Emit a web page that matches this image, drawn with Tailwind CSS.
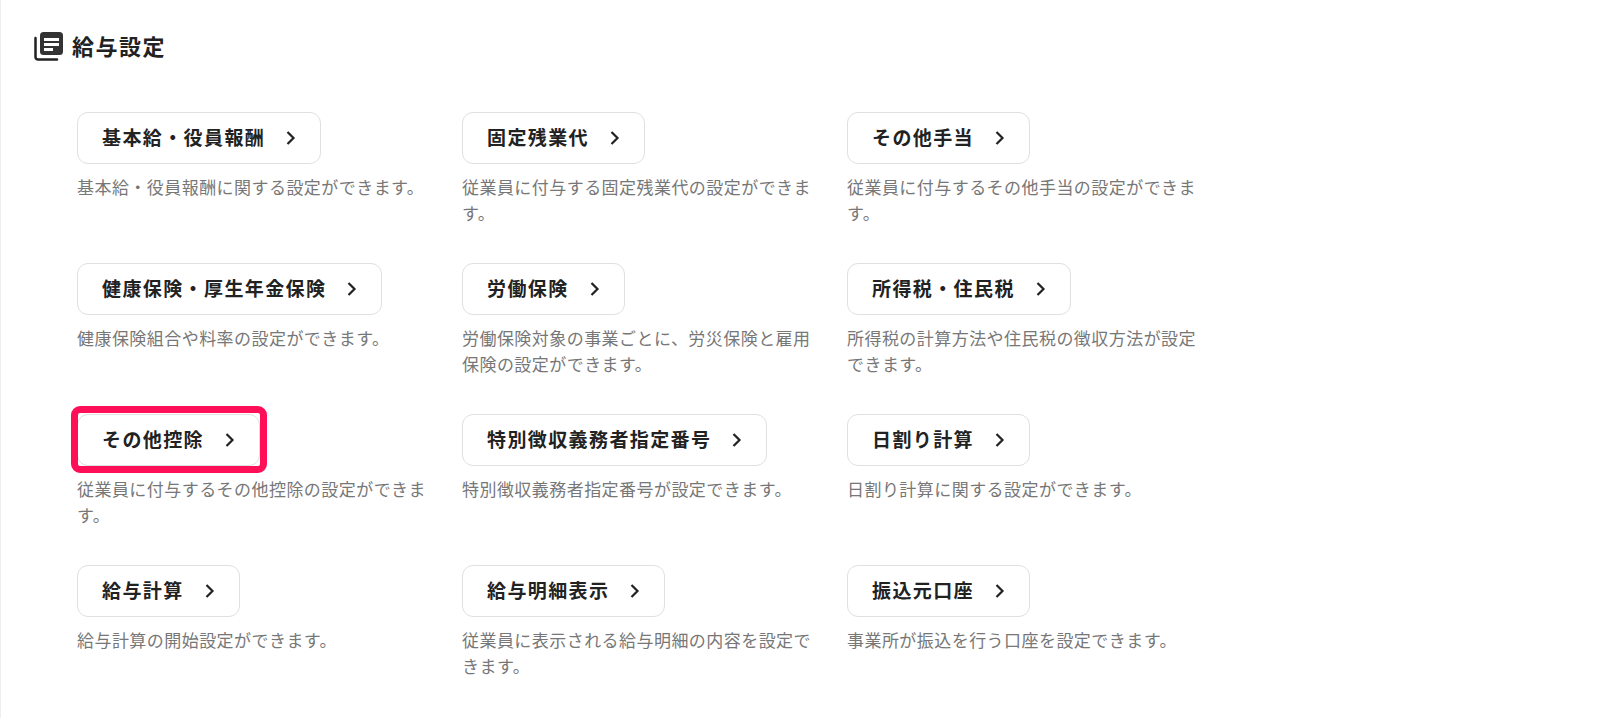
<!DOCTYPE html>
<html lang="ja">
<head>
  <meta charset="UTF-8" />
  <title>給与設定</title>
  <script src="https://cdn.jsdelivr.net/npm/@tailwindcss/browser@4"></script>
</head>
<body class="bg-white h-[718px] overflow-hidden font-['Noto_Sans_CJK_JP','Noto_Sans',sans-serif] text-[#222]">
  <div class="h-full border-l border-[#eee] pl-[33px] pt-[31px]">
    <div class="flex items-center gap-[9px] h-[30px]">
      <svg class="w-[29px] h-[30px]" viewBox="0 0 29 30">
        <path d="M1.5 7v19a2.5 2.5 0 0 0 2.5 2.5h19" fill="none" stroke="#222" stroke-width="2.5" stroke-linecap="round" />
        <rect x="6" y="1" width="23" height="23" rx="3.5" fill="#333" />
        <path d="M10 7h15v3H10zM10 12h15v3H10zM10 17h9v3h-9z" fill="#fff" />
      </svg>
      <h1 class="text-[22px] leading-none font-bold tracking-[1.5px] pb-[2px]">給与設定</h1>
    </div>

    <div class="grid grid-cols-[351px_351px_351px] gap-x-[34px] auto-rows-[151px] ml-[43px] mt-[51px]">
      <div>
        <a class="inline-flex items-center gap-[20px] h-[52px] pl-[24px] pr-[23px] border border-[#e0e0e0] rounded-[11px] bg-white"><span class="text-[19px] font-bold tracking-[1.4px] pb-[1px]">基本給・役員報酬</span><svg class="w-[12px] h-[16px]" viewBox="0 0 12 16"><path d="M2.5 2l6 6-6 6" fill="none" stroke="#222" stroke-width="2.2" /></svg></a>
        <p class="mt-[10px] text-[17px] leading-[26px] tracking-[0.45px] text-[#777]">基本給・役員報酬に関する設定ができます。</p>
      </div>
      <div>
        <a class="inline-flex items-center gap-[20px] h-[52px] pl-[24px] pr-[23px] border border-[#e0e0e0] rounded-[11px] bg-white"><span class="text-[19px] font-bold tracking-[1.4px] pb-[1px]">固定残業代</span><svg class="w-[12px] h-[16px]" viewBox="0 0 12 16"><path d="M2.5 2l6 6-6 6" fill="none" stroke="#222" stroke-width="2.2" /></svg></a>
        <p class="mt-[10px] text-[17px] leading-[26px] tracking-[0.45px] text-[#777]">従業員に付与する固定残業代の設定ができます。</p>
      </div>
      <div>
        <a class="inline-flex items-center gap-[20px] h-[52px] pl-[24px] pr-[23px] border border-[#e0e0e0] rounded-[11px] bg-white"><span class="text-[19px] font-bold tracking-[1.4px] pb-[1px]">その他手当</span><svg class="w-[12px] h-[16px]" viewBox="0 0 12 16"><path d="M2.5 2l6 6-6 6" fill="none" stroke="#222" stroke-width="2.2" /></svg></a>
        <p class="mt-[10px] text-[17px] leading-[26px] tracking-[0.45px] text-[#777]">従業員に付与するその他手当の設定ができます。</p>
      </div>

      <div>
        <a class="inline-flex items-center gap-[20px] h-[52px] pl-[24px] pr-[23px] border border-[#e0e0e0] rounded-[11px] bg-white"><span class="text-[19px] font-bold tracking-[1.4px] pb-[1px]">健康保険・厚生年金保険</span><svg class="w-[12px] h-[16px]" viewBox="0 0 12 16"><path d="M2.5 2l6 6-6 6" fill="none" stroke="#222" stroke-width="2.2" /></svg></a>
        <p class="mt-[10px] text-[17px] leading-[26px] tracking-[0.45px] text-[#777]">健康保険組合や料率の設定ができます。</p>
      </div>
      <div>
        <a class="inline-flex items-center gap-[20px] h-[52px] pl-[24px] pr-[23px] border border-[#e0e0e0] rounded-[11px] bg-white"><span class="text-[19px] font-bold tracking-[1.4px] pb-[1px]">労働保険</span><svg class="w-[12px] h-[16px]" viewBox="0 0 12 16"><path d="M2.5 2l6 6-6 6" fill="none" stroke="#222" stroke-width="2.2" /></svg></a>
        <p class="mt-[10px] text-[17px] leading-[26px] tracking-[0.45px] text-[#777]">労働保険対象の事業ごとに、労災保険と雇用保険の設定ができます。</p>
      </div>
      <div>
        <a class="inline-flex items-center gap-[20px] h-[52px] pl-[24px] pr-[23px] border border-[#e0e0e0] rounded-[11px] bg-white"><span class="text-[19px] font-bold tracking-[1.4px] pb-[1px]">所得税・住民税</span><svg class="w-[12px] h-[16px]" viewBox="0 0 12 16"><path d="M2.5 2l6 6-6 6" fill="none" stroke="#222" stroke-width="2.2" /></svg></a>
        <p class="mt-[10px] text-[17px] leading-[26px] tracking-[0.45px] text-[#777]">所得税の計算方法や住民税の徴収方法が設定できます。</p>
      </div>

      <div>
        <div class="relative inline-flex">
          <a class="inline-flex items-center gap-[20px] h-[52px] pl-[24px] pr-[23px] border border-[#e0e0e0] rounded-[11px] bg-white"><span class="text-[19px] font-bold tracking-[1.4px] pb-[1px]">その他控除</span><svg class="w-[12px] h-[16px]" viewBox="0 0 12 16"><path d="M2.5 2l6 6-6 6" fill="none" stroke="#222" stroke-width="2.2" /></svg></a>
          <div class="absolute -left-[6px] -right-[7px] -top-[8px] -bottom-[7px] border-[7px] border-[#ff0f58] rounded-[9px]"></div>
        </div>
        <p class="mt-[10px] text-[17px] leading-[26px] tracking-[0.45px] text-[#777]">従業員に付与するその他控除の設定ができます。</p>
      </div>
      <div>
        <a class="inline-flex items-center gap-[20px] h-[52px] pl-[24px] pr-[23px] border border-[#e0e0e0] rounded-[11px] bg-white"><span class="text-[19px] font-bold tracking-[1.4px] pb-[1px]">特別徴収義務者指定番号</span><svg class="w-[12px] h-[16px]" viewBox="0 0 12 16"><path d="M2.5 2l6 6-6 6" fill="none" stroke="#222" stroke-width="2.2" /></svg></a>
        <p class="mt-[10px] text-[17px] leading-[26px] tracking-[0.45px] text-[#777]">特別徴収義務者指定番号が設定できます。</p>
      </div>
      <div>
        <a class="inline-flex items-center gap-[20px] h-[52px] pl-[24px] pr-[23px] border border-[#e0e0e0] rounded-[11px] bg-white"><span class="text-[19px] font-bold tracking-[1.4px] pb-[1px]">日割り計算</span><svg class="w-[12px] h-[16px]" viewBox="0 0 12 16"><path d="M2.5 2l6 6-6 6" fill="none" stroke="#222" stroke-width="2.2" /></svg></a>
        <p class="mt-[10px] text-[17px] leading-[26px] tracking-[0.45px] text-[#777]">日割り計算に関する設定ができます。</p>
      </div>

      <div>
        <a class="inline-flex items-center gap-[20px] h-[52px] pl-[24px] pr-[23px] border border-[#e0e0e0] rounded-[11px] bg-white"><span class="text-[19px] font-bold tracking-[1.4px] pb-[1px]">給与計算</span><svg class="w-[12px] h-[16px]" viewBox="0 0 12 16"><path d="M2.5 2l6 6-6 6" fill="none" stroke="#222" stroke-width="2.2" /></svg></a>
        <p class="mt-[10px] text-[17px] leading-[26px] tracking-[0.45px] text-[#777]">給与計算の開始設定ができます。</p>
      </div>
      <div>
        <a class="inline-flex items-center gap-[20px] h-[52px] pl-[24px] pr-[23px] border border-[#e0e0e0] rounded-[11px] bg-white"><span class="text-[19px] font-bold tracking-[1.4px] pb-[1px]">給与明細表示</span><svg class="w-[12px] h-[16px]" viewBox="0 0 12 16"><path d="M2.5 2l6 6-6 6" fill="none" stroke="#222" stroke-width="2.2" /></svg></a>
        <p class="mt-[10px] text-[17px] leading-[26px] tracking-[0.45px] text-[#777]">従業員に表示される給与明細の内容を設定できます。</p>
      </div>
      <div>
        <a class="inline-flex items-center gap-[20px] h-[52px] pl-[24px] pr-[23px] border border-[#e0e0e0] rounded-[11px] bg-white"><span class="text-[19px] font-bold tracking-[1.4px] pb-[1px]">振込元口座</span><svg class="w-[12px] h-[16px]" viewBox="0 0 12 16"><path d="M2.5 2l6 6-6 6" fill="none" stroke="#222" stroke-width="2.2" /></svg></a>
        <p class="mt-[10px] text-[17px] leading-[26px] tracking-[0.45px] text-[#777]">事業所が振込を行う口座を設定できます。</p>
      </div>
    </div>
  </div>
</body>
</html>
